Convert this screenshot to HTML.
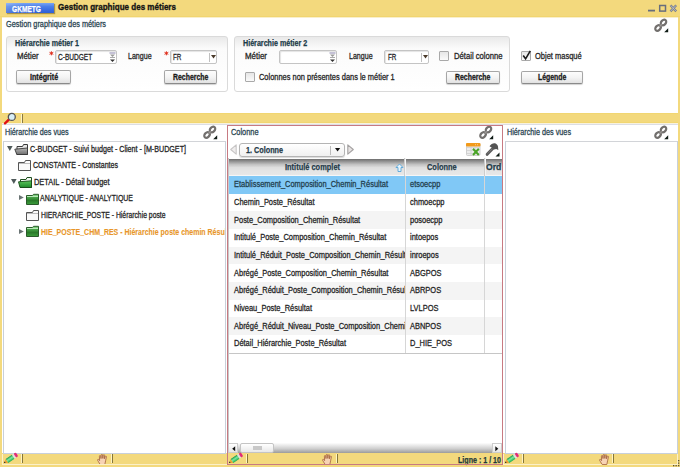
<!DOCTYPE html><html><head><meta charset="utf-8"><style>
*{margin:0;padding:0}
html,body{width:680px;height:467px;overflow:hidden;background:#f3d97d}
body>div,body>span,body>svg{position:absolute}
div>span.t{position:absolute}
.t{position:absolute;white-space:nowrap;font-family:"Liberation Sans",sans-serif;transform-origin:0 0}
svg{position:absolute;overflow:visible}
</style></head><body>
<div style="left:6px;top:3px;width:48px;height:10px;background:linear-gradient(100deg,rgba(255,255,255,.22),rgba(255,255,255,0) 35%),linear-gradient(#7aa4f2,#4c7fe8 35%,#3a6ce0 70%,#2f60d6);box-shadow:1px 1px 1px rgba(110,90,30,.55)"></div>
<span class="t" style="left:11.8px;top:3px;font-size:9px;line-height:12px;color:#fff;font-weight:bold;-webkit-text-stroke:0.25px #fff;transform:scaleX(0.7342);">GKMETG</span>
<span class="t" style="left:58.4px;top:1px;font-size:9.8px;line-height:12px;color:#141414;font-weight:bold;-webkit-text-stroke:0.35px #141414;transform:scaleX(0.8207);">Gestion graphique des métiers</span>
<svg style="left:645px;top:1px" width="35" height="14"><g fill="none"><line x1="3" y1="9.6" x2="10" y2="9.6" stroke="#686e7c" stroke-width="1.8"/><rect x="14.7" y="4.5" width="5.8" height="5.6" stroke="#686e7c" stroke-width="1.5"/><path d="M25.5 4.2 L31.2 10.4 M31.2 4.2 L25.5 10.4" stroke="#7a7f8c" stroke-width="2.3"/><path d="M25.8 4.5 L30.9 10.1 M30.9 4.5 L25.8 10.1" stroke="#c8ccd4" stroke-width="0.7"/></g></svg>
<div style="left:0px;top:16px;width:680px;height:1px;background:#f1d570"></div>
<div style="left:2px;top:17px;width:676px;height:1px;background:#f9efcc"></div>
<div style="left:2px;top:18px;width:676px;height:95px;background:#fff"></div>
<span class="t" style="left:6.2px;top:18px;font-size:8.5px;line-height:12px;color:#2b4652;-webkit-text-stroke:0.28px #2b4652;transform:scaleX(0.8638);">Gestion graphique des métiers</span>
<svg style="left:654px;top:18px" width="16" height="15"><g fill="none" stroke="#726f6d" stroke-width="2.2"><ellipse cx="9.5" cy="4.5" rx="3.1" ry="2.3" transform="rotate(-45 9.5 4.5)"/><ellipse cx="4.0" cy="10.0" rx="3.1" ry="2.3" transform="rotate(-45 4.0 10.0)"/><path d="M5.8 8.2 L7.8 6.2" stroke="#9a9794" stroke-width="1.4"/></g><path d="M14.2 10.2 L14.2 14.2 L10.2 14.2 Z" fill="#0e1a14"/></svg>
<div style="left:6px;top:36px;width:222px;height:56px;border:1px solid #dadada;border-radius:3px;background:linear-gradient(#e9e9e9,#fbfbfb 12px,#fff);box-sizing:border-box"></div>
<div style="left:234px;top:36px;width:276px;height:56px;border:1px solid #dadada;border-radius:3px;background:linear-gradient(#e9e9e9,#fbfbfb 12px,#fff);box-sizing:border-box"></div>
<span class="t" style="left:15px;top:37px;font-size:9px;line-height:12px;color:#1c3c48;font-weight:bold;-webkit-text-stroke:0.25px #1c3c48;transform:scaleX(0.7897);">Hiérarchie métier 1</span>
<span class="t" style="left:243.1px;top:37px;font-size:9px;line-height:12px;color:#1c3c48;font-weight:bold;-webkit-text-stroke:0.25px #1c3c48;transform:scaleX(0.7934);">Hiérarchie métier 2</span>
<span class="t" style="left:17px;top:50px;font-size:8.5px;line-height:12px;color:#262626;-webkit-text-stroke:0.28px #262626;transform:scaleX(0.9188);">Métier</span>
<svg style="left:49px;top:51px" width="5" height="5"><path d="M2.4 0.3 L2.4 4.3 M0.5 1.3 L4.3 3.3 M4.3 1.3 L0.5 3.3" stroke="#e0301e" stroke-width="1"/></svg>
<div style="left:55px;top:50px;width:62px;height:14px;border:1px solid #c4c4c4;border-radius:2px;background:#fff;box-sizing:border-box;box-shadow:inset 1px 1px 1px #e4e4e4"></div>
<span class="t" style="left:57.6px;top:51px;font-size:8.5px;line-height:12px;color:#262626;-webkit-text-stroke:0.28px #262626;transform:scaleX(0.7704);">C-BUDGET</span>
<svg style="left:109px;top:52px" width="7" height="11"><rect x="0.5" y="0.5" width="6" height="1" fill="#8b86b0"/><path d="M1 2.5 L6 2.5 L3.5 5 Z" fill="#9a9a9a"/><rect x="1" y="5" width="5" height="1" fill="#aaa"/><path d="M1 7.5 L6 7.5 L3.5 10 Z" fill="#333"/></svg>
<span class="t" style="left:128px;top:50px;font-size:8.5px;line-height:12px;color:#262626;-webkit-text-stroke:0.28px #262626;transform:scaleX(0.8320);">Langue</span>
<svg style="left:163.5px;top:51px" width="5" height="5"><path d="M2.4 0.3 L2.4 4.3 M0.5 1.3 L4.3 3.3 M4.3 1.3 L0.5 3.3" stroke="#e0301e" stroke-width="1"/></svg>
<div style="left:170px;top:50px;width:47px;height:14px;border:1px solid #c4c4c4;border-radius:2px;background:#fff;box-sizing:border-box;box-shadow:inset 1px 1px 1px #e4e4e4"></div>
<div style="left:209px;top:53px;width:1px;height:9px;background:#c0c0c0"></div>
<svg style="left:211px;top:55px" width="5" height="4"><path d="M0 0 L5 0 L2.5 3.5 Z" fill="#4a3a2a"/></svg>
<span class="t" style="left:172.8px;top:51px;font-size:8.5px;line-height:12px;color:#262626;-webkit-text-stroke:0.28px #262626;transform:scaleX(0.7413);">FR</span>
<div style="left:16px;top:70px;width:55px;height:14px;border:1px solid #a6a6a6;border-bottom-color:#8a8a8a;border-radius:2px;background:linear-gradient(#fdfdfd,#f4f4f4 50%,#e2e2e2);box-sizing:border-box;box-shadow:0 1px 1px rgba(0,0,0,.18)"></div>
<span class="t" style="left:29.9px;top:71px;font-size:9px;line-height:12px;color:#1a1a1a;font-weight:bold;-webkit-text-stroke:0.3px #1a1a1a;transform:scaleX(0.7943);">Intégrité</span>
<div style="left:164px;top:70px;width:53px;height:14px;border:1px solid #a6a6a6;border-bottom-color:#8a8a8a;border-radius:2px;background:linear-gradient(#fdfdfd,#f4f4f4 50%,#e2e2e2);box-sizing:border-box;box-shadow:0 1px 1px rgba(0,0,0,.18)"></div>
<span class="t" style="left:173.2px;top:71px;font-size:9px;line-height:12px;color:#1a1a1a;font-weight:bold;-webkit-text-stroke:0.3px #1a1a1a;transform:scaleX(0.7670);">Recherche</span>
<span class="t" style="left:245px;top:50px;font-size:8.5px;line-height:12px;color:#262626;-webkit-text-stroke:0.28px #262626;transform:scaleX(0.9315);">Métier</span>
<div style="left:279px;top:50px;width:58px;height:14px;border:1px solid #c4c4c4;border-radius:2px;background:#fff;box-sizing:border-box;box-shadow:inset 1px 1px 1px #e4e4e4"></div>
<svg style="left:329px;top:52px" width="7" height="11"><rect x="0.5" y="0.5" width="6" height="1" fill="#8b86b0"/><path d="M1 2.5 L6 2.5 L3.5 5 Z" fill="#9a9a9a"/><rect x="1" y="5" width="5" height="1" fill="#aaa"/><path d="M1 7.5 L6 7.5 L3.5 10 Z" fill="#333"/></svg>
<span class="t" style="left:349.4px;top:50px;font-size:8.5px;line-height:12px;color:#262626;-webkit-text-stroke:0.28px #262626;transform:scaleX(0.8320);">Langue</span>
<div style="left:384px;top:50px;width:45px;height:14px;border:1px solid #c4c4c4;border-radius:2px;background:#fff;box-sizing:border-box;box-shadow:inset 1px 1px 1px #e4e4e4"></div>
<div style="left:421px;top:53px;width:1px;height:9px;background:#c0c0c0"></div>
<svg style="left:423px;top:55px" width="5" height="4"><path d="M0 0 L5 0 L2.5 3.5 Z" fill="#4a3a2a"/></svg>
<span class="t" style="left:387.6px;top:51px;font-size:8.5px;line-height:12px;color:#262626;-webkit-text-stroke:0.28px #262626;transform:scaleX(0.7413);">FR</span>
<div style="left:439px;top:51px;width:10px;height:10px;border:1px solid #a9a9a9;background:linear-gradient(#e6e6e6,#fafafa);box-sizing:border-box;border-radius:1px"></div>
<span class="t" style="left:454px;top:50px;font-size:8.5px;line-height:12px;color:#262626;-webkit-text-stroke:0.28px #262626;transform:scaleX(0.9022);">Détail colonne</span>
<div style="left:245px;top:72px;width:10px;height:10px;border:1px solid #a9a9a9;background:linear-gradient(#e6e6e6,#fafafa);box-sizing:border-box;border-radius:1px"></div>
<span class="t" style="left:259.3px;top:71px;font-size:8.5px;line-height:12px;color:#262626;-webkit-text-stroke:0.28px #262626;transform:scaleX(0.8756);">Colonnes non présentes dans le métier 1</span>
<div style="left:446px;top:70.5px;width:54px;height:13.5px;border:1px solid #a6a6a6;border-bottom-color:#8a8a8a;border-radius:2px;background:linear-gradient(#fdfdfd,#f4f4f4 50%,#e2e2e2);box-sizing:border-box;box-shadow:0 1px 1px rgba(0,0,0,.18)"></div>
<span class="t" style="left:455.3px;top:71px;font-size:9px;line-height:12px;color:#1a1a1a;font-weight:bold;-webkit-text-stroke:0.3px #1a1a1a;transform:scaleX(0.7670);">Recherche</span>
<div style="left:521px;top:51px;width:10px;height:10px;border:1px solid #a9a9a9;background:linear-gradient(#e6e6e6,#fafafa);box-sizing:border-box;border-radius:1px"></div>
<svg style="left:521px;top:49px" width="11" height="12"><path d="M2.2 6.5 L4.6 9.8 L9.3 1.8" stroke="#1a1a1a" stroke-width="1.6" fill="none"/></svg>
<span class="t" style="left:535.4px;top:50px;font-size:8.5px;line-height:12px;color:#262626;-webkit-text-stroke:0.28px #262626;transform:scaleX(0.8825);">Objet masqué</span>
<div style="left:521px;top:70.5px;width:62px;height:13.5px;border:1px solid #a6a6a6;border-bottom-color:#8a8a8a;border-radius:2px;background:linear-gradient(#fdfdfd,#f4f4f4 50%,#e2e2e2);box-sizing:border-box;box-shadow:0 1px 1px rgba(0,0,0,.18)"></div>
<span class="t" style="left:537.8px;top:71px;font-size:9px;line-height:12px;color:#1a1a1a;font-weight:bold;-webkit-text-stroke:0.3px #1a1a1a;transform:scaleX(0.7674);">Légende</span>
<div style="left:2px;top:113px;width:676px;height:1px;background:#f1d672"></div>
<div style="left:2px;top:122px;width:676px;height:1px;background:#f1d672"></div>
<div style="left:2px;top:123px;width:676px;height:1px;background:#f8f2de"></div>
<div style="left:2px;top:124px;width:676px;height:1px;background:#dcdee4"></div>
<svg style="left:3px;top:112px" width="14" height="13"><line x1="2" y1="11.3" x2="6.3" y2="7.2" stroke="#e01010" stroke-width="2.4" stroke-linecap="round"/><circle cx="8.8" cy="4.9" r="3.5" fill="#d8eef6" stroke="#555" stroke-width="1.3"/></svg>
<div style="left:21.5px;top:114px;width:1.2px;height:9px;background:#8a7a40;box-shadow:-1px 0 0 #fff4c4"></div>
<div style="left:2px;top:125px;width:225px;height:328px;background:#fff"></div>
<span class="t" style="left:5.3px;top:126px;font-size:8.5px;line-height:12px;color:#2b4652;-webkit-text-stroke:0.28px #2b4652;transform:scaleX(0.8466);">Hiérarchie des vues</span>
<div style="left:3px;top:141px;width:223px;height:313px;border:1px solid #c8d0da;border-top-color:#d2d4d8;box-sizing:border-box"></div>
<svg style="left:203px;top:125px" width="16" height="15"><g fill="none" stroke="#726f6d" stroke-width="2.2"><ellipse cx="9.5" cy="4.5" rx="3.1" ry="2.3" transform="rotate(-45 9.5 4.5)"/><ellipse cx="4.0" cy="10.0" rx="3.1" ry="2.3" transform="rotate(-45 4.0 10.0)"/><path d="M5.8 8.2 L7.8 6.2" stroke="#9a9794" stroke-width="1.4"/></g><path d="M14.2 10.2 L14.2 14.2 L10.2 14.2 Z" fill="#0e1a14"/></svg>
<div style="left:503px;top:125px;width:175px;height:328px;background:#fff"></div>
<span class="t" style="left:507.3px;top:126px;font-size:8.5px;line-height:12px;color:#2b4652;-webkit-text-stroke:0.28px #2b4652;transform:scaleX(0.8520);">Hiérarchie des vues</span>
<div style="left:505px;top:141px;width:173px;height:313px;border:1px solid #c8d0da;border-top-color:#d2d4d8;box-sizing:border-box"></div>
<svg style="left:654px;top:125px" width="16" height="15"><g fill="none" stroke="#726f6d" stroke-width="2.2"><ellipse cx="9.5" cy="4.5" rx="3.1" ry="2.3" transform="rotate(-45 9.5 4.5)"/><ellipse cx="4.0" cy="10.0" rx="3.1" ry="2.3" transform="rotate(-45 4.0 10.0)"/><path d="M5.8 8.2 L7.8 6.2" stroke="#9a9794" stroke-width="1.4"/></g><path d="M14.2 10.2 L14.2 14.2 L10.2 14.2 Z" fill="#0e1a14"/></svg>
<div style="left:227px;top:125px;width:276px;height:328px;background:#fff"></div>
<span class="t" style="left:230.8px;top:126px;font-size:8.5px;line-height:12px;color:#2b4652;-webkit-text-stroke:0.28px #2b4652;transform:scaleX(0.8716);">Colonne</span>
<svg style="left:479px;top:125px" width="16" height="15"><g fill="none" stroke="#726f6d" stroke-width="2.2"><ellipse cx="9.5" cy="4.5" rx="3.1" ry="2.3" transform="rotate(-45 9.5 4.5)"/><ellipse cx="4.0" cy="10.0" rx="3.1" ry="2.3" transform="rotate(-45 4.0 10.0)"/><path d="M5.8 8.2 L7.8 6.2" stroke="#9a9794" stroke-width="1.4"/></g><path d="M14.2 10.2 L14.2 14.2 L10.2 14.2 Z" fill="#0e1a14"/></svg>
<svg style="left:229px;top:142px" width="9" height="15"><path d="M7.2 2.8 L1.7 7.5 L7.2 12.2 Z" fill="#efeded" stroke="#c8c6c6" stroke-width="1.1" stroke-linejoin="round"/></svg>
<svg style="left:346px;top:142px" width="9" height="15"><path d="M1.8 2.8 L7.3 7.5 L1.8 12.2 Z" fill="#e6e2e2" stroke="#a4a2a2" stroke-width="1.1" stroke-linejoin="round"/></svg>
<div style="left:239px;top:143px;width:106px;height:14px;border:1px solid #b4b4b4;border-radius:3px;background:linear-gradient(#fff,#f0f0f0);box-sizing:border-box;box-shadow:0 1px 1px rgba(0,0,0,.15)"></div>
<span class="t" style="left:245.9px;top:144px;font-size:9px;line-height:12px;color:#1f3a48;font-weight:bold;-webkit-text-stroke:0.25px #1f3a48;transform:scaleX(0.8043);">1. Colonne</span>
<div style="left:330px;top:146px;width:1px;height:9px;background:#bbb"></div>
<svg style="left:334.5px;top:148px" width="6" height="5"><path d="M0 0 L5.2 0 L2.6 3.6 Z" fill="#111"/></svg>
<svg style="left:466px;top:143px" width="15" height="13"><rect x="0.5" y="0.5" width="13.5" height="12" rx="1" fill="#ececec" stroke="#cfcfcf"/><path d="M1 4.5 H13.5 M1 7.5 H13.5 M1 10.5 H13.5 M5 3.5 V12 M9 3.5 V12" stroke="#d0d0d0" stroke-width="0.8"/><rect x="0" y="0" width="14.5" height="3.5" rx="1" fill="#f29a1a"/><path d="M9 1.7 H13" stroke="#f8d8a0" stroke-width="0.8" stroke-dasharray="1 1"/><path d="M7 5.8 L12.8 12 M12.8 5.8 L7 12" stroke="#4aa428" stroke-width="2"/></svg>
<svg style="left:485px;top:142px" width="15" height="16"><path d="M2.2 12.3 L8 6.3" stroke="#5e5e5e" stroke-width="3" stroke-linecap="round"/><path d="M2.8 11.2 L7.4 6.6" stroke="#9a9a9a" stroke-width="0.8" stroke-dasharray="0.8 0.8"/><path d="M4.5 4.2 C6 2 8 1 10 1.3 C11.5 1.6 12.5 3 13 4.5 L13.3 8 L11.2 7 L9 7.5 L6.2 5.2 Z" fill="#545454"/><path d="M14.5 10.5 L14.5 14.5 L10.5 14.5 Z" fill="#0e1a14"/></svg>
<div style="left:228px;top:158.6px;width:274px;height:17.4px;background:linear-gradient(#6e6e6e 0px,#8c8c8c 2px,#c2c2c2 5.5px,#dedede 8.5px,#e5e5e5 12px,#e6e6e6 15.4px,#f6f6f6 16.4px)"></div>
<div style="left:404px;top:158px;width:1px;height:18px;background:#cdcdcd;box-shadow:1px 0 0 #f4f4f4"></div>
<div style="left:484px;top:158px;width:1px;height:18px;background:#cdcdcd;box-shadow:1px 0 0 #f4f4f4"></div>
<span class="t" style="left:284.6px;top:161px;font-size:9px;line-height:12px;color:#1f3a48;font-weight:bold;-webkit-text-stroke:0.25px #1f3a48;transform:scaleX(0.8270);">Intitulé complet</span>
<span class="t" style="left:427.3px;top:161px;font-size:9px;line-height:12px;color:#1f3a48;font-weight:bold;-webkit-text-stroke:0.25px #1f3a48;transform:scaleX(0.8251);">Colonne</span>
<div style="left:485px;top:158px;width:17px;height:18px;overflow:hidden"><span class="t" style="left:0.6999999999999886px;top:3px;font-size:9px;line-height:12px;color:#1f3a48;font-weight:bold;-webkit-text-stroke:0.25px #1f3a48;transform:scaleX(0.9562);">Ord</span></div>
<svg style="left:394.5px;top:162.5px" width="9" height="10"><path d="M4.5 1 L8 4.5 L6 4.5 L6 8.5 L3 8.5 L3 4.5 L1 4.5 Z" fill="#e8f4fc" stroke="#58a6d8" stroke-width="0.9"/></svg>
<div style="left:228px;top:176px;width:274px;height:18px;background:#80c8f6"></div>
<div style="left:228px;top:176px;width:177px;height:18px;overflow:hidden"><span class="t" style="left:6.300000000000011px;top:2px;font-size:8.5px;line-height:12px;color:#23404e;-webkit-text-stroke:0.28px #23404e;transform:scaleX(0.8786);">Etablissement_Composition_Chemin_Résultat</span></div>
<span class="t" style="left:409.6px;top:178px;font-size:8.5px;line-height:12px;color:#23404e;-webkit-text-stroke:0.28px #23404e;transform:scaleX(0.8786);">etsoecpp</span>
<div style="left:228px;top:194px;width:274px;height:17px;background:#fff"></div>
<div style="left:228px;top:194px;width:177px;height:17px;overflow:hidden"><span class="t" style="left:6.300000000000011px;top:2px;font-size:8.5px;line-height:12px;color:#262626;-webkit-text-stroke:0.28px #262626;transform:scaleX(0.8786);">Chemin_Poste_Résultat</span></div>
<span class="t" style="left:409.6px;top:196px;font-size:8.5px;line-height:12px;color:#262626;-webkit-text-stroke:0.28px #262626;transform:scaleX(0.8786);">chmoecpp</span>
<div style="left:228px;top:211px;width:274px;height:18px;background:#f4f4f4"></div>
<div style="left:228px;top:211px;width:177px;height:18px;overflow:hidden"><span class="t" style="left:6.300000000000011px;top:3px;font-size:8.5px;line-height:12px;color:#262626;-webkit-text-stroke:0.28px #262626;transform:scaleX(0.8786);">Poste_Composition_Chemin_Résultat</span></div>
<span class="t" style="left:409.6px;top:214px;font-size:8.5px;line-height:12px;color:#262626;-webkit-text-stroke:0.28px #262626;transform:scaleX(0.8786);">posoecpp</span>
<div style="left:228px;top:229px;width:274px;height:18px;background:#fff"></div>
<div style="left:228px;top:229px;width:177px;height:18px;overflow:hidden"><span class="t" style="left:6.300000000000011px;top:2px;font-size:8.5px;line-height:12px;color:#262626;-webkit-text-stroke:0.28px #262626;transform:scaleX(0.8786);">Intitulé_Poste_Composition_Chemin_Résultat</span></div>
<span class="t" style="left:409.6px;top:231px;font-size:8.5px;line-height:12px;color:#262626;-webkit-text-stroke:0.28px #262626;transform:scaleX(0.8786);">intoepos</span>
<div style="left:228px;top:247px;width:274px;height:17px;background:#f4f4f4"></div>
<div style="left:228px;top:247px;width:177px;height:17px;overflow:hidden"><span class="t" style="left:6.300000000000011px;top:2px;font-size:8.5px;line-height:12px;color:#262626;-webkit-text-stroke:0.28px #262626;transform:scaleX(0.8786);">Intitulé_Réduit_Poste_Composition_Chemin_Résultat</span></div>
<span class="t" style="left:409.6px;top:249px;font-size:8.5px;line-height:12px;color:#262626;-webkit-text-stroke:0.28px #262626;transform:scaleX(0.8786);">inroepos</span>
<div style="left:228px;top:264px;width:274px;height:18px;background:#fff"></div>
<div style="left:228px;top:264px;width:177px;height:18px;overflow:hidden"><span class="t" style="left:6.300000000000011px;top:3px;font-size:8.5px;line-height:12px;color:#262626;-webkit-text-stroke:0.28px #262626;transform:scaleX(0.8786);">Abrégé_Poste_Composition_Chemin_Résultat</span></div>
<span class="t" style="left:409.6px;top:267px;font-size:8.5px;line-height:12px;color:#262626;-webkit-text-stroke:0.28px #262626;transform:scaleX(0.8786);">ABGPOS</span>
<div style="left:228px;top:282px;width:274px;height:18px;background:#f4f4f4"></div>
<div style="left:228px;top:282px;width:177px;height:18px;overflow:hidden"><span class="t" style="left:6.300000000000011px;top:2px;font-size:8.5px;line-height:12px;color:#262626;-webkit-text-stroke:0.28px #262626;transform:scaleX(0.8786);">Abrégé_Réduit_Poste_Composition_Chemin_Résultat</span></div>
<span class="t" style="left:409.6px;top:284px;font-size:8.5px;line-height:12px;color:#262626;-webkit-text-stroke:0.28px #262626;transform:scaleX(0.8786);">ABRPOS</span>
<div style="left:228px;top:300px;width:274px;height:17px;background:#fff"></div>
<div style="left:228px;top:300px;width:177px;height:17px;overflow:hidden"><span class="t" style="left:6.300000000000011px;top:2px;font-size:8.5px;line-height:12px;color:#262626;-webkit-text-stroke:0.28px #262626;transform:scaleX(0.8786);">Niveau_Poste_Résultat</span></div>
<span class="t" style="left:409.6px;top:302px;font-size:8.5px;line-height:12px;color:#262626;-webkit-text-stroke:0.28px #262626;transform:scaleX(0.8786);">LVLPOS</span>
<div style="left:228px;top:317px;width:274px;height:18px;background:#f4f4f4"></div>
<div style="left:228px;top:317px;width:177px;height:18px;overflow:hidden"><span class="t" style="left:6.300000000000011px;top:3px;font-size:8.5px;line-height:12px;color:#262626;-webkit-text-stroke:0.28px #262626;transform:scaleX(0.8786);">Abrégé_Réduit_Niveau_Poste_Composition_Chemin_Résultat</span></div>
<span class="t" style="left:409.6px;top:320px;font-size:8.5px;line-height:12px;color:#262626;-webkit-text-stroke:0.28px #262626;transform:scaleX(0.8786);">ABNPOS</span>
<div style="left:228px;top:335px;width:274px;height:18px;background:#fff"></div>
<div style="left:228px;top:335px;width:177px;height:18px;overflow:hidden"><span class="t" style="left:6.300000000000011px;top:2px;font-size:8.5px;line-height:12px;color:#262626;-webkit-text-stroke:0.28px #262626;transform:scaleX(0.8786);">Détail_Hiérarchie_Poste_Résultat</span></div>
<span class="t" style="left:409.6px;top:337px;font-size:8.5px;line-height:12px;color:#262626;-webkit-text-stroke:0.28px #262626;transform:scaleX(0.8786);">D_HIE_POS</span>
<div style="left:405px;top:176px;width:1px;height:177px;background:#d6d6d6"></div>
<div style="left:484px;top:176px;width:1px;height:177px;background:#d6d6d6"></div>
<div style="left:228px;top:353px;width:274px;height:1px;background:#c6c6c6"></div>
<div style="left:228px;top:158px;width:1px;height:295px;background:#c8c8c8"></div>
<div style="left:228px;top:443px;width:274px;height:10px;background:linear-gradient(#fdfdfd,#d0d0d0 55%,#9c9c9c)"></div>
<div style="left:228px;top:443px;width:10px;height:10px;background:linear-gradient(#fff,#e6e6e6);border:1px solid #ccc;box-sizing:border-box"></div>
<svg style="left:231px;top:445.5px" width="6" height="6"><path d="M4.2 0.3 L4.2 5.2 L1.2 2.75 Z" fill="#111"/></svg>
<div style="left:240px;top:443px;width:34px;height:10px;background:linear-gradient(#fff,#e8e8e8);border:1px solid #c4c4c4;border-radius:2px;box-sizing:border-box"></div>
<div style="left:253px;top:446px;width:9px;height:4px;background:#c8c8c8"></div>
<div style="left:492px;top:443px;width:10px;height:10px;background:linear-gradient(#fff,#e6e6e6);border:1px solid #ccc;box-sizing:border-box"></div>
<svg style="left:494px;top:445.5px" width="6" height="6"><path d="M1.3 0.3 L1.3 5.2 L4.3 2.75 Z" fill="#111"/></svg>
<svg width="0" height="0" style="position:absolute"><defs><linearGradient id="gg" x1="0" y1="0" x2="0" y2="1"><stop offset="0" stop-color="#4aa84a"/><stop offset="0.5" stop-color="#2a7a2a"/><stop offset="1" stop-color="#3a9a3a"/></linearGradient><linearGradient id="go" x1="0" y1="0" x2="0" y2="1"><stop offset="0" stop-color="#5cc45c"/><stop offset="1" stop-color="#1e8a2a"/></linearGradient><linearGradient id="gy" x1="0" y1="0" x2="0" y2="1"><stop offset="0" stop-color="#b8b8b8"/><stop offset="1" stop-color="#6e6e6e"/></linearGradient></defs></svg>
<svg style="left:7px;top:146px" width="6" height="6"><path d="M0 0 L5.6 0 L2.8 5 Z" fill="#4f5a5a"/></svg>
<svg style="left:14px;top:143px" width="15" height="13"><path d="M3 3.5 L8.5 3.5 L9.5 1.5 L13.5 1.5 L13.5 11.5 L3 11.5 Z" fill="#e6e6e6" stroke="#3a3a3a"/><path d="M0.8 6.2 L13.5 5 L13.5 11.5 L2.8 11.5 Z" fill="url(#gy)" stroke="#3a3a3a" stroke-width="0.9"/></svg>
<span class="t" style="left:30px;top:143px;font-size:8.5px;line-height:12px;color:#262626;-webkit-text-stroke:0.28px #262626;transform:scaleX(0.8411);">C-BUDGET - Suivi budget - Client - [M-BUDGET]</span>
<svg style="left:18px;top:160px" width="14" height="12"><path d="M0.5 2.5 L6.5 2.5 L7.5 0.5 L12.5 0.5 L12.5 10.5 L0.5 10.5 Z" fill="#fafafa" stroke="#555"/><line x1="1" y1="3.5" x2="12" y2="3.5" stroke="#bbb"/></svg>
<span class="t" style="left:33px;top:159px;font-size:8.5px;line-height:12px;color:#262626;-webkit-text-stroke:0.28px #262626;transform:scaleX(0.8305);">CONSTANTE - Constantes</span>
<svg style="left:10.5px;top:179px" width="6" height="6"><path d="M0 0 L5.6 0 L2.8 5 Z" fill="#4f5a5a"/></svg>
<svg style="left:17.5px;top:177px" width="15" height="12"><path d="M2.5 2.5 L8 2.5 L9 0.5 L13.5 0.5 L13.5 10.5 L2.5 10.5 Z" fill="#f0f8f0" stroke="#1f4f1f"/><path d="M0.5 4.8 L13.5 3.8 L13.5 10.5 L2 10.5 Z" fill="url(#go)" stroke="#1a4a1a" stroke-width="0.9"/></svg>
<span class="t" style="left:33.5px;top:176px;font-size:8.5px;line-height:12px;color:#262626;-webkit-text-stroke:0.28px #262626;transform:scaleX(0.8732);">DETAIL - Détail budget</span>
<svg style="left:18.6px;top:195px" width="6" height="6"><path d="M0 0 L0 5 L4.8 2.5 Z" fill="#6a7474"/></svg>
<svg style="left:26px;top:193.5px" width="13" height="11"><path d="M0.5 1.5 L6.5 1.5 L7.5 0.3 L12.5 0.3 L12.5 10.5 L0.5 10.5 Z" fill="#7ccc7c" stroke="#2a5a2a"/><rect x="1" y="3" width="11" height="7" fill="url(#gg)"/><line x1="1" y1="2.5" x2="12" y2="2.5" stroke="#b8e8b8"/></svg>
<span class="t" style="left:40.2px;top:192px;font-size:8.5px;line-height:12px;color:#262626;-webkit-text-stroke:0.28px #262626;transform:scaleX(0.8192);">ANALYTIQUE - ANALYTIQUE</span>
<svg style="left:26px;top:209.5px" width="14" height="12"><path d="M0.5 2.5 L6.5 2.5 L7.5 0.5 L12.5 0.5 L12.5 10.5 L0.5 10.5 Z" fill="#fafafa" stroke="#555"/><line x1="1" y1="3.5" x2="12" y2="3.5" stroke="#bbb"/></svg>
<span class="t" style="left:40.7px;top:209px;font-size:8.5px;line-height:12px;color:#262626;-webkit-text-stroke:0.28px #262626;transform:scaleX(0.8011);">HIERARCHIE_POSTE - Hiérarchie poste</span>
<svg style="left:18.6px;top:229px" width="6" height="6"><path d="M0 0 L0 5 L4.8 2.5 Z" fill="#6a7474"/></svg>
<svg style="left:26px;top:226px" width="13" height="11"><path d="M0.5 1.5 L6.5 1.5 L7.5 0.3 L12.5 0.3 L12.5 10.5 L0.5 10.5 Z" fill="#7ccc7c" stroke="#2a5a2a"/><rect x="1" y="3" width="11" height="7" fill="url(#gg)"/><line x1="1" y1="2.5" x2="12" y2="2.5" stroke="#b8e8b8"/></svg>
<div style="left:40px;top:224px;width:185px;height:14px;overflow:hidden"><span class="t" style="left:0.7000000000000028px;top:2px;font-size:8.5px;line-height:12px;color:#e8962a;font-weight:bold;-webkit-text-stroke:0.1px #e8962a;transform:scaleX(0.8220);">HIE_POSTE_CHM_RES - Hiérarchie poste chemin Résultat</span></div>
<svg width="0" height="0" style="position:absolute"><defs><linearGradient id="pg" x1="0" y1="0" x2="0" y2="1"><stop offset="0" stop-color="#1a9a48"/><stop offset="0.45" stop-color="#7ce8a0"/><stop offset="1" stop-color="#20b050"/></linearGradient></defs></svg>
<svg style="left:1.5px;top:450.8px" width="18" height="14"><g transform="translate(2 12) rotate(-34)"><path d="M0 0 L1.6 -1 L1.6 1 Z" fill="#111"/><path d="M1.6 -1 L3.6 -2.3 L3.6 2.3 L1.6 1 Z" fill="#f0a030"/><rect x="3.6" y="-2.3" width="7.6" height="4.6" fill="url(#pg)"/><rect x="11.2" y="-2.3" width="1.9" height="4.6" fill="#e0dde0"/><rect x="13.1" y="-2.3" width="2.6" height="4.6" rx="1.2" fill="#e22a78"/></g></svg>
<div style="left:21.5px;top:454px;width:1px;height:9px;background:#857638;box-shadow:-1px 0 0 #fff4c4"></div>
<svg style="left:97px;top:453.5px" width="11" height="11"><path d="M3.2 10.5 L1.5 7.8 L0.6 6.2 C0.3 5.4 1.2 5 1.8 5.6 L2.6 6.6 L2.4 2.2 C2.4 1.3 3.6 1.3 3.7 2.2 L4 4.6 L4.2 1 C4.3 0.2 5.5 0.2 5.6 1 L5.8 4.4 L6.3 1.2 C6.5 0.4 7.6 0.5 7.6 1.4 L7.3 4.8 L8.3 2.4 C8.6 1.7 9.6 2 9.4 2.8 L8.6 6.8 L7.8 10.5 Z" fill="#f7d3b4" stroke="#a2603a" stroke-width="0.8"/></svg>
<div style="left:111.8px;top:454px;width:1px;height:9px;background:#857638;box-shadow:-1px 0 0 #fff4c4"></div>
<svg style="left:226.5px;top:450.8px" width="18" height="14"><g transform="translate(2 12) rotate(-34)"><path d="M0 0 L1.6 -1 L1.6 1 Z" fill="#111"/><path d="M1.6 -1 L3.6 -2.3 L3.6 2.3 L1.6 1 Z" fill="#f0a030"/><rect x="3.6" y="-2.3" width="7.6" height="4.6" fill="url(#pg)"/><rect x="11.2" y="-2.3" width="1.9" height="4.6" fill="#e0dde0"/><rect x="13.1" y="-2.3" width="2.6" height="4.6" rx="1.2" fill="#e22a78"/></g></svg>
<div style="left:247px;top:454px;width:1px;height:9px;background:#857638;box-shadow:-1px 0 0 #fff4c4"></div>
<svg style="left:322px;top:453.5px" width="11" height="11"><path d="M3.2 10.5 L1.5 7.8 L0.6 6.2 C0.3 5.4 1.2 5 1.8 5.6 L2.6 6.6 L2.4 2.2 C2.4 1.3 3.6 1.3 3.7 2.2 L4 4.6 L4.2 1 C4.3 0.2 5.5 0.2 5.6 1 L5.8 4.4 L6.3 1.2 C6.5 0.4 7.6 0.5 7.6 1.4 L7.3 4.8 L8.3 2.4 C8.6 1.7 9.6 2 9.4 2.8 L8.6 6.8 L7.8 10.5 Z" fill="#f7d3b4" stroke="#a2603a" stroke-width="0.8"/></svg>
<div style="left:336.8px;top:454px;width:1px;height:9px;background:#857638;box-shadow:-1px 0 0 #fff4c4"></div>
<span class="t" style="left:458.2px;top:454px;font-size:9px;line-height:12px;color:#1f3a3a;font-weight:bold;-webkit-text-stroke:0.25px #1f3a3a;transform:scaleX(0.7888);">Ligne : 1 / 10</span>
<div style="left:2px;top:464px;width:676px;height:1px;background:#fbf0c8"></div>
<div style="left:2px;top:454px;width:1px;height:10px;background:#fbf0c8"></div>
<div style="left:677px;top:454px;width:1px;height:10px;background:#fbf0c8"></div>
<div style="left:503px;top:454px;width:1px;height:10px;background:#fbf0c8"></div>
<svg style="left:672px;top:459px" width="8" height="8"><g fill="#5a5030"><rect x="6" y="1" width="1.3" height="1.3"/><rect x="6" y="3.5" width="1.3" height="1.3"/><rect x="6" y="6" width="1.3" height="1.3"/><rect x="3.5" y="6" width="1.3" height="1.3"/><rect x="1" y="6" width="1.3" height="1.3"/></g></svg>
<svg style="left:503.3px;top:450.8px" width="18" height="14"><g transform="translate(2 12) rotate(-34)"><path d="M0 0 L1.6 -1 L1.6 1 Z" fill="#111"/><path d="M1.6 -1 L3.6 -2.3 L3.6 2.3 L1.6 1 Z" fill="#f0a030"/><rect x="3.6" y="-2.3" width="7.6" height="4.6" fill="url(#pg)"/><rect x="11.2" y="-2.3" width="1.9" height="4.6" fill="#e0dde0"/><rect x="13.1" y="-2.3" width="2.6" height="4.6" rx="1.2" fill="#e22a78"/></g></svg>
<div style="left:523.4px;top:454px;width:1px;height:9px;background:#857638;box-shadow:-1px 0 0 #fff4c4"></div>
<svg style="left:598.8px;top:453.5px" width="11" height="11"><path d="M3.2 10.5 L1.5 7.8 L0.6 6.2 C0.3 5.4 1.2 5 1.8 5.6 L2.6 6.6 L2.4 2.2 C2.4 1.3 3.6 1.3 3.7 2.2 L4 4.6 L4.2 1 C4.3 0.2 5.5 0.2 5.6 1 L5.8 4.4 L6.3 1.2 C6.5 0.4 7.6 0.5 7.6 1.4 L7.3 4.8 L8.3 2.4 C8.6 1.7 9.6 2 9.4 2.8 L8.6 6.8 L7.8 10.5 Z" fill="#f7d3b4" stroke="#a2603a" stroke-width="0.8"/></svg>
<div style="left:613px;top:454px;width:1px;height:9px;background:#857638;box-shadow:-1px 0 0 #fff4c4"></div>
<div style="left:227px;top:464px;width:276px;height:1px;background:#c77a82"></div>
<div style="left:227px;top:125px;width:1px;height:340px;background:#c77a82"></div>
<div style="left:502px;top:125px;width:1px;height:340px;background:#c77a82"></div>
<div style="left:227px;top:125px;width:276px;height:1px;background:#c77a82"></div>
</body></html>
